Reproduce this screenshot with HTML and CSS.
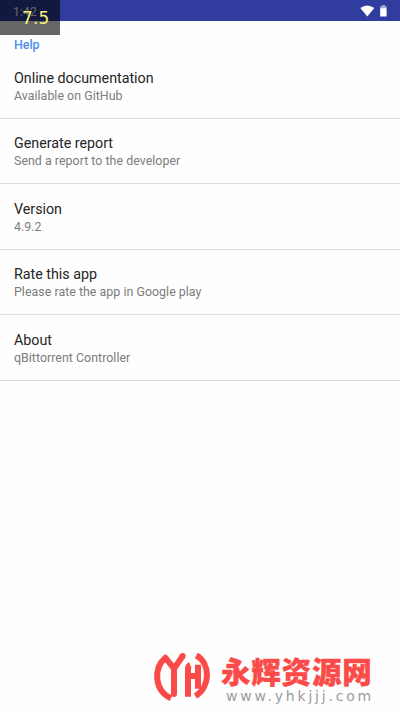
FILE: index.html
```
<!DOCTYPE html>
<html lang="en">
<head>
<meta charset="utf-8">
<title>Help</title>
<link rel="stylesheet" href="styles.css">
</head>
<body>
<header class="status">
  <span class="clock">1:42</span>
  <svg class="status-icons" width="30" height="14" viewBox="0 0 30 14">
    <path d="M0.3 4 Q7.3 -1 14.3 4 L7.3 12.5Z" fill="#fff"/>
    <path d="M20.2 3.2 Q20.2 2.2 21.2 2.2 H22 V1 H25 V2.2 H25.6 Q26.6 2.2 26.6 3.2 V12.5 H20.2Z" fill="#fff"/>
    <path d="M20.2 3.2 Q20.2 2.2 21.2 2.2 H22 V1 H25 V2.2 H25.6 Q26.6 2.2 26.6 3.2 V4.2 H20.2Z" fill="#303f9f" opacity=".45"/>
  </svg>
</header>
<div class="badge">7.5</div>
<main>
  <h1>Help</h1>
  <section class="row"><h2>Online documentation</h2><p>Available on GitHub</p></section>
  <section class="row"><h2>Generate report</h2><p>Send a report to the developer</p></section>
  <section class="row"><h2>Version</h2><p>4.9.2</p></section>
  <section class="row"><h2>Rate this app</h2><p>Please rate the app in Google play</p></section>
  <section class="row"><h2>About</h2><p>qBittorrent Controller</p></section>
</main>
<footer class="watermark">
  <svg class="logo" width="64" height="56" viewBox="0 0 192 168" fill="none" stroke="#fa4b49" stroke-width="18" stroke-linejoin="round">
    <path d="M63 151 C13 128 9 62 46 29 L72 62 L98 24" />
    <path d="M72 58 V138" stroke-linecap="round"/>
    <circle cx="98" cy="24" r="9" fill="#fa4b49" stroke="none"/>
    <path d="M114 146 V62 Q114 54 121 51 M114 84 H144 M144 50 V122"/>
    <path d="M139 22 C182 46 182 118 136 144"/>
  </svg>
  <div class="brand">
    <div class="name">永辉资源网</div>
    <div class="site">www.yhkjjj.com</div>
  </div>
</footer>
</body>
</html>
```
FILE: styles.css
```
* { box-sizing: border-box; margin: 0; padding: 0; }
body {
  width: 400px;
  height: 712px;
  overflow: hidden;
  display: flex;
  flex-direction: column;
  background: #fefefe;
  font-family: Roboto, sans-serif;
}
.status {
  height: 21px;
  flex: none;
  display: flex;
  justify-content: space-between;
  align-items: center;
  padding: 2px 10px 0 13px;
  background: #303d9e;
}
.status-icons { margin-top: -2px; }
.clock { color: #fff; font-size: 12px; letter-spacing: 0.2px; }
.badge {
  position: absolute;
  left: 0;
  top: 0;
  width: 60px;
  height: 35px;
  padding-left: 22px;
  background: rgba(0, 0, 0, 0.6);
  color: #f6f078;
  font: 17px/37px "DejaVu Sans", sans-serif;
  letter-spacing: 0.2px;
}
h1 {
  padding: 16px 14px 0;
  height: 32.6px;
  color: #4a8fec;
  font-size: 12.4px;
  line-height: 16px;
  font-weight: 500;
}
.row {
  height: 65.4px;
  padding: 15.5px 14px 0;
  border-bottom: 1px solid #dedede;
}
h2 { color: #252525; font-size: 14.3px; font-weight: 400; line-height: 19px; letter-spacing: -0.02px; }
p { color: #7c7c7c; font-size: 12.4px; line-height: 16.4px; letter-spacing: 0.03px; }
.watermark {
  margin-top: auto;
  height: 64px;
  padding-left: 150px;
  display: flex;
}
.logo { flex: none; }
.brand { padding: 4px 0 0 7px; }
.name {
  color: #fa4b49;
  font: 900 29.5px/36px "Noto Sans CJK SC", sans-serif;
  letter-spacing: 0.8px;
  white-space: nowrap;
  -webkit-text-stroke: 0.4px #fa4b49;
}
.site {
  padding: 1px 0 0 5px;
  color: #9c9c9c;
  font: 14px/15px "DejaVu Sans", sans-serif;
  letter-spacing: 2.8px;
}
```
